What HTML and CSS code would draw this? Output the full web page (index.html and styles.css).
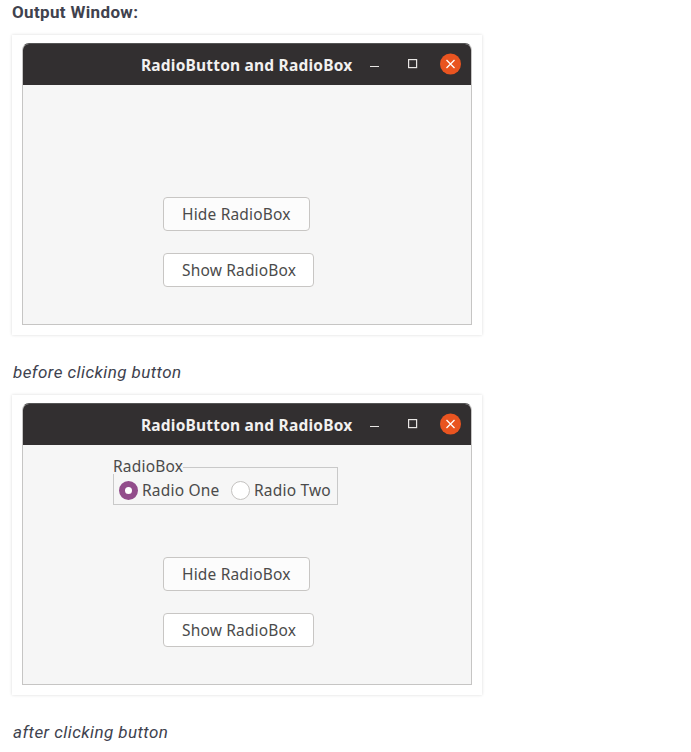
FILE: index.html
```
<!DOCTYPE html>
<html lang="en">
<head>
<meta charset="utf-8">
<title>RadioButton and RadioBox</title>
<link rel="stylesheet" href="styles.css">
</head>
<body>
<main class="article">
  <h2 class="heading">Output Window:</h2>
  <figure class="shot">
    <div class="card">
      <section class="window">
        <header class="titlebar">
          <span class="title">RadioButton and RadioBox</span>
          <svg class="controls" width="96" height="24" viewBox="0 0 96 24">
            <path d="M2 14.5h9" stroke="#e8e6e4" stroke-width="1.2"/>
            <rect x="40.6" y="7.6" width="8" height="8" fill="none" stroke="#e8e6e4" stroke-width="1.2"/>
            <circle cx="82.5" cy="12" r="10.5" fill="#e95420"/>
            <path d="M78.5 8l8 8m0-8l-8 8" stroke="#fff" stroke-width="1.3"/>
          </svg>
        </header>
        <div class="content">
          <div class="top"></div>
          <button class="btn hide">Hide RadioBox</button>
          <button class="btn show">Show RadioBox</button>
        </div>
      </section>
    </div>
    <figcaption class="caption">before clicking button</figcaption>
  </figure>
  <figure class="shot">
    <div class="card">
      <section class="window">
        <header class="titlebar">
          <span class="title">RadioButton and RadioBox</span>
          <svg class="controls" width="96" height="24" viewBox="0 0 96 24">
            <path d="M2 14.5h9" stroke="#e8e6e4" stroke-width="1.2"/>
            <rect x="40.6" y="7.6" width="8" height="8" fill="none" stroke="#e8e6e4" stroke-width="1.2"/>
            <circle cx="82.5" cy="12" r="10.5" fill="#e95420"/>
            <path d="M78.5 8l8 8m0-8l-8 8" stroke="#fff" stroke-width="1.3"/>
          </svg>
        </header>
        <div class="content">
          <div class="top">
            <div class="radiobox">
              <span class="legend">RadioBox</span>
              <span class="radio checked"></span><span class="label one">Radio One</span>
              <span class="radio"></span><span class="label two">Radio Two</span>
            </div>
          </div>
          <button class="btn hide">Hide RadioBox</button>
          <button class="btn show">Show RadioBox</button>
        </div>
      </section>
    </div>
    <figcaption class="caption">after clicking button</figcaption>
  </figure>
</main>
</body>
</html>
```
FILE: styles.css
```
* { box-sizing: border-box; }
body { margin: 0; background: #fff; overflow: hidden; color: #40424e; font-family: Roboto, sans-serif; }
.article { padding-left: 12px; }
.heading { margin: 0; height: 35px; font-size: 17px; line-height: 24px; font-weight: 700; letter-spacing: 0.35px; }
.shot { margin: 0; height: 360px; }
.card { width: 470px; height: 300px; padding: 8px 10px 10px; background: #fff; box-shadow: 0 0 3px rgba(0, 0, 0, 0.15); }
.window {
  width: 450px; height: 282px; display: flex; flex-direction: column;
  border: 1px solid #c6c5c4; border-top-color: #555; border-radius: 7px 7px 0 0;
  background: #f6f6f6; overflow: hidden;
  font-family: "Noto Sans", sans-serif; color: #4b4b4b;
}
.titlebar { height: 41px; flex: none; padding-left: 118px; display: flex; align-items: center; background: #322f30; color: #f2f1f0; }
.title { width: 227px; margin-top: 1px; font-size: 15.5px; line-height: 24px; font-weight: 700; letter-spacing: 0.2px; white-space: nowrap; }
.controls { flex: none; margin-top: -1px; }
.content { flex: 1; display: flex; flex-direction: column; align-items: flex-start; padding-left: 140px; }
.top { height: 112px; flex: none; }
.btn {
  height: 34px; margin: 0 0 22px; padding: 0 0 0 18px; border: 1px solid #c8c6c4; border-radius: 4px;
  background: #fcfcfc; font: 15.5px/22px "Noto Sans", sans-serif; letter-spacing: 0.17px;
  color: #4b4b4b; text-align: left; white-space: nowrap;
}
.btn.hide { width: 147px; }
.btn.show { width: 151px; background: #fff; }
.radiobox {
  position: relative; width: 225px; height: 38px; margin: 22px 0 0 -50px; padding: 8px 0 0 5px;
  display: flex; align-items: center; border: 1px solid #c9c9c9;
  font-size: 15.5px; line-height: 22px; letter-spacing: 0.2px; white-space: nowrap;
}
.legend { position: absolute; left: -1px; top: -10px; line-height: 16px; background: #f6f6f6; }
.radio { flex: none; width: 19px; height: 19px; border: 1px solid #c4c2c0; border-radius: 50%; background: #fff; }
.radio.checked { border: 6.5px solid #924d8b; }
.label { flex: none; margin-left: 4px; }
.label.one { width: 89px; }
.caption { height: 60px; padding: 25px 0 0 1px; font-size: 17px; line-height: 24px; font-style: italic; letter-spacing: 0.43px; }
```
